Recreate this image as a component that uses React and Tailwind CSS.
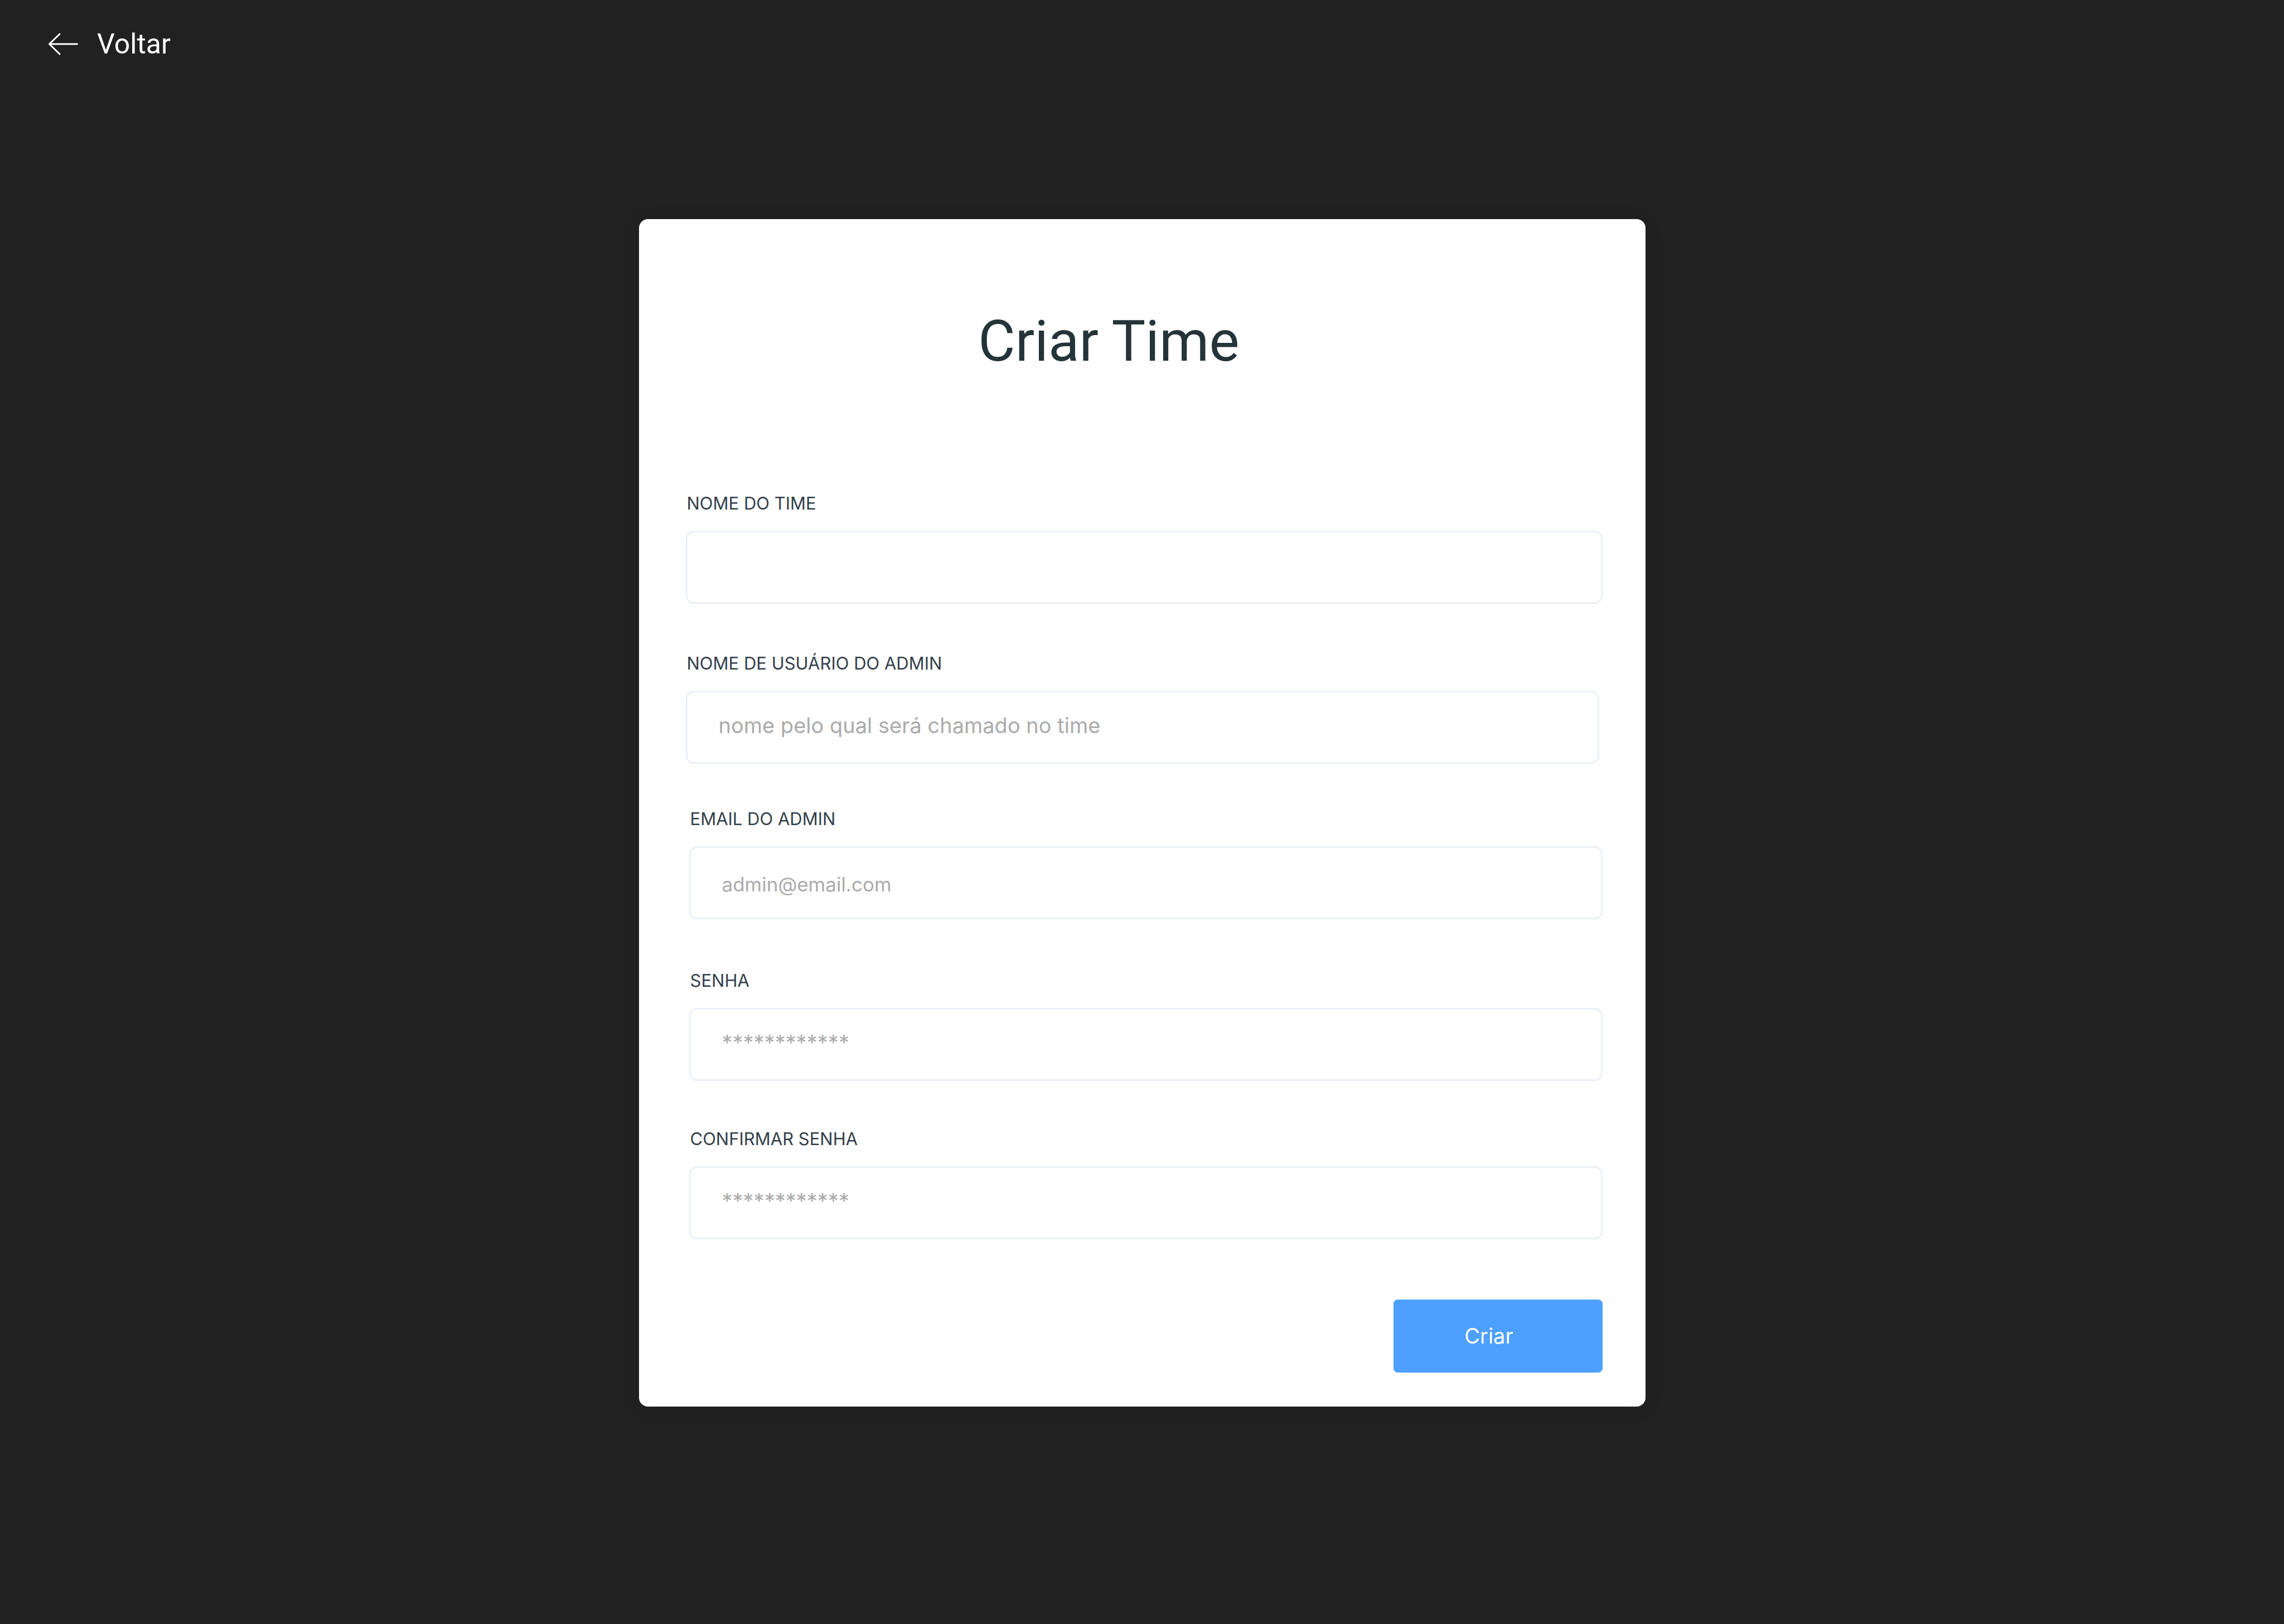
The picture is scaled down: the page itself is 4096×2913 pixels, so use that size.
import React from "react";

const fields = [
  { id: "team", label: "NOME DO TIME", type: "text", placeholder: "", box: "", input: "" },
  {
    id: "username",
    label: "NOME DE USUÁRIO DO ADMIN",
    type: "text",
    placeholder: "nome pelo qual será chamado no time",
    box: "mt-[87px] pr-1.5",
    input: "pb-2 text-[38px]",
  },
  {
    id: "email",
    label: "EMAIL DO ADMIN",
    type: "email",
    placeholder: "admin@email.com",
    box: "mt-[79px] pl-1.5",
    input: "pt-1 text-[35px]",
  },
  {
    id: "password",
    label: "SENHA",
    type: "password",
    placeholder: "************",
    box: "mt-[90px] pl-1.5",
    input: "pb-2 text-[38px]",
  },
  {
    id: "confirm",
    label: "CONFIRMAR SENHA",
    type: "password",
    placeholder: "************",
    box: "mt-[84px] pl-1.5",
    input: "pb-2 text-[38px]",
  },
];

function Field({ id, label, type, placeholder, box, input }) {
  return (
    <div className={`flex flex-col ${box}`}>
      <label htmlFor={id} className="mb-[29px] pl-0.5 text-[31px] leading-10 text-[#323f4b]">
        {label}
      </label>
      <input
        id={id}
        name={id}
        type={type}
        placeholder={placeholder}
        className={`h-[131px] w-full rounded-[14px] border-3 border-[#ebf0f6] bg-white px-14 text-[#323f4b] outline-none placeholder:text-[#ababab] ${input}`}
      />
    </div>
  );
}

export default function App() {
  return (
    <div className="flex min-h-screen flex-col bg-[#212121] font-[Inter,sans-serif]">
      <header className="flex px-[87px] pt-[51px]">
        <a
          href="#voltar"
          className="flex items-center gap-[34px] font-[Roboto,sans-serif] text-[50px] leading-14 text-white"
        >
          <svg
            className="h-10 w-[53px]"
            viewBox="0 0 53 40"
            fill="none"
            stroke="currentColor"
            strokeWidth="3"
            strokeLinecap="round"
            strokeLinejoin="round"
            aria-hidden="true"
          >
            <path d="M20 2 1.5 20 20 38M1.5 20h50" />
          </svg>
          Voltar
        </a>
      </header>

      <main className="mx-auto mt-[286px] w-full max-w-[1805px] rounded-2xl bg-white pt-[159px] pr-[77px] pb-[61px] pl-[84px] shadow-[0_4px_40px_rgba(0,0,0,0.06)]">
        <h1 className="mb-[211px] pr-[126px] text-center font-[Roboto,sans-serif] text-[102px] leading-[120px] text-[#243438]">
          Criar Time
        </h1>
        <form className="flex flex-col">
          {fields.map((field) => (
            <Field key={field.id} {...field} />
          ))}
          <button
            type="button"
            className="mt-[108px] h-[131px] w-[375px] self-end rounded-lg bg-[#4da0ff] pr-8 text-[38px] text-white"
          >
            Criar
          </button>
        </form>
      </main>
    </div>
  );
}
